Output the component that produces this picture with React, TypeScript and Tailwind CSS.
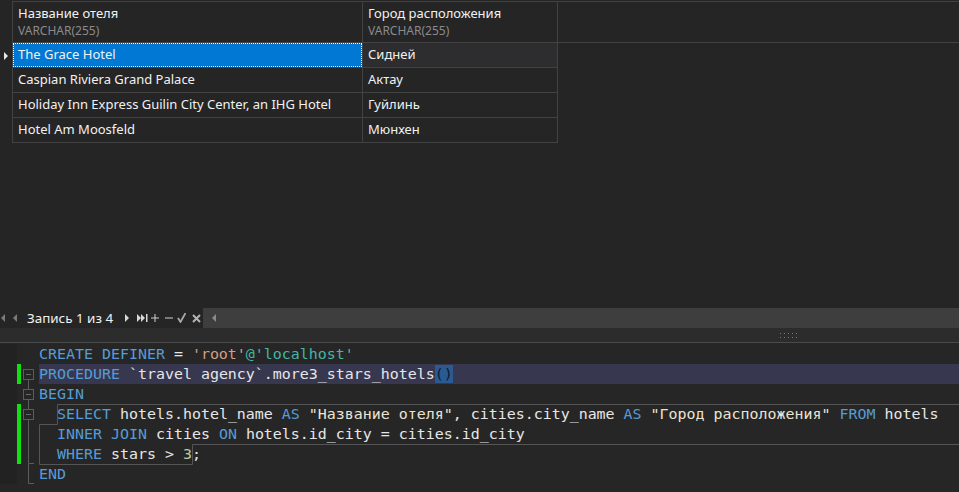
import React from 'react';

const rows = [
  { name: 'The Grace Hotel', city: 'Сидней' },
  { name: 'Caspian Riviera Grand Palace', city: 'Актау' },
  { name: 'Holiday Inn Express Guilin City Center, an IHG Hotel', city: 'Гуйлинь' },
  { name: 'Hotel Am Moosfeld', city: 'Мюнхен' },
];

const K = ({ children }: { children: React.ReactNode }) => <span className="text-[#569cd6]">{children}</span>;
const S = ({ children }: { children: React.ReactNode }) => <span className="text-[#ebe3d3]">{children}</span>;

type Fold = 'none' | 'start' | 'box' | 'line' | 'end';

const FoldMark = ({ kind }: { kind: Fold }) => (
  <svg width="18" height="20" className="block">
    {kind === 'start' && (
      <>
        <rect x="2.5" y="5.5" width="10" height="10" fill="none" stroke="#5c5c5c" />
        <line x1="5" y1="10.5" x2="10" y2="10.5" stroke="#6a6a6a" />
        <line x1="7.5" y1="15.5" x2="7.5" y2="20" stroke="#5c5c5c" />
      </>
    )}
    {kind === 'box' && (
      <>
        <line x1="7.5" y1="0" x2="7.5" y2="5.5" stroke="#5c5c5c" />
        <rect x="2.5" y="5.5" width="10" height="10" fill="none" stroke="#5c5c5c" />
        <line x1="5" y1="10.5" x2="10" y2="10.5" stroke="#6a6a6a" />
        <line x1="7.5" y1="15.5" x2="7.5" y2="20" stroke="#5c5c5c" />
      </>
    )}
    {kind === 'line' && <line x1="7.5" y1="0" x2="7.5" y2="20" stroke="#5c5c5c" />}
    {kind === 'end' && (
      <>
        <line x1="7.5" y1="0" x2="7.5" y2="19.5" stroke="#5c5c5c" />
        <line x1="7.5" y1="19.5" x2="13" y2="19.5" stroke="#5c5c5c" />
      </>
    )}
  </svg>
);

const codeLines: { fold: Fold; changed: boolean; current?: boolean; content: React.ReactNode }[] = [
  {
    fold: 'none',
    changed: false,
    content: (
      <>
        <K>CREATE DEFINER</K> = <span className="text-[#d69d85]">'root'</span>
        <span className="text-[#45b5a5]">@'localhost'</span>
      </>
    ),
  },
  {
    fold: 'start',
    changed: true,
    current: true,
    content: (
      <>
        <K>PROCEDURE</K> `travel agency`.more3_stars_hotels
        <span className="bg-[#2b5a93] text-[#0c1a2c]">()</span>
      </>
    ),
  },
  { fold: 'box', changed: false, content: <K>BEGIN</K> },
  {
    fold: 'box',
    changed: true,
    content: (
      <>
        {'  '}
        <K>SELECT</K> hotels.hotel_name <K>AS</K> <S>"Название отеля"</S>, cities.city_name <K>AS</K>{' '}
        <S>"Город расположения"</S> <K>FROM</K> hotels
      </>
    ),
  },
  {
    fold: 'line',
    changed: true,
    content: (
      <>
        {'  '}
        <K>INNER JOIN</K> cities <K>ON</K> hotels.id_city = cities.id_city
      </>
    ),
  },
  {
    fold: 'end',
    changed: true,
    content: (
      <>
        {'  '}
        <K>WHERE</K> stars &gt; <span className="text-[#b5cea8]">3</span>;
      </>
    ),
  },
  { fold: 'end', changed: false, content: <K>END</K> },
];

const Tri = ({ dir, color }: { dir: 'l' | 'r'; color: string }) => (
  <svg width="4" height="8" className="block">
    {dir === 'l' ? <polygon points="4,0 4,8 0,4" fill={color} /> : <polygon points="0,0 0,8 4,4" fill={color} />}
  </svg>
);

export default function App() {
  return (
    <div className="w-[959px] h-[492px] bg-[#252526] flex flex-col overflow-hidden text-[#f1f1f1] font-['Noto_Sans',sans-serif]">
      {/* result grid */}
      <div className="h-[308px] pt-px">
        <div className="flex h-[42px]">
          <div className="w-[12px]" />
          <div className="w-[351px] border border-[#424242] pl-[5px] pt-[3px] flex flex-col">
            <div className="text-[13px] leading-[17px]">Название отеля</div>
            <div className="text-[12px] leading-[17px] text-[#8b8b8b]">VARCHAR(255)</div>
          </div>
          <div className="w-[195px] border-y border-r border-[#424242] pl-[5px] pt-[3px] flex flex-col">
            <div className="text-[13px] leading-[17px]">Город расположения</div>
            <div className="text-[12px] leading-[17px] text-[#8b8b8b]">VARCHAR(255)</div>
          </div>
          <div className="flex-1 border-y border-[#424242]" />
        </div>
        {rows.map((r, i) => (
          <div key={r.name} className="flex h-[25px]">
            <div className="w-[12px] flex items-center pl-[4px]">
              {i === 0 && <Tri dir="r" color="#e8e8e8" />}
            </div>
            <div
              className={
                'w-[351px] border-l border-r border-b border-[#424242] flex items-center text-[13px] ' +
                (i === 0 ? 'bg-[#0078d4]' : '')
              }
            >
              <div
                className={
                  'w-full h-full flex items-center pl-[4px] ' +
                  (i === 0 ? 'border border-dotted border-white' : 'border border-transparent')
                }
              >
                {r.name}
              </div>
            </div>
            <div
              className={
                'w-[195px] border-r border-b border-[#424242] flex items-center pl-[5px] text-[13px] ' +
                (i === 0 ? 'bg-[#2d2d30]' : '')
              }
            >
              {r.city}
            </div>
          </div>
        ))}
      </div>

      {/* record navigator */}
      <div className="h-[20px] flex items-center">
        <div className="w-[203px] flex items-center h-full pl-[1px]">
          <Tri dir="l" color="#7a7a7a" />
          <div className="ml-[8px]">
            <Tri dir="l" color="#7a7a7a" />
          </div>
          <span className="text-[13.4px] ml-[10px] w-[98px] whitespace-nowrap">Запись 1 из 4</span>
          <Tri dir="r" color="#d8d8d8" />
          <svg width="11" height="8" className="block ml-[8px]">
            <polygon points="0,0 0,8 4,4" fill="#d8d8d8" />
            <polygon points="4,0 4,8 8,4" fill="#d8d8d8" />
            <rect x="9" y="0" width="1.5" height="8" fill="#d8d8d8" />
          </svg>
          <svg width="8" height="8" className="block ml-[3px]">
            <rect x="0" y="3.5" width="8" height="1" fill="#d0d0d0" />
            <rect x="3.5" y="0" width="1" height="8" fill="#d0d0d0" />
          </svg>
          <svg width="8" height="8" className="block ml-[6px]">
            <rect x="0" y="3.5" width="8" height="1" fill="#d0d0d0" />
          </svg>
          <svg width="9" height="10" className="block ml-[4px]">
            <polyline points="1,5 3.5,9 8.5,0" fill="none" stroke="#a8a8a8" strokeWidth="1.8" />
          </svg>
          <svg width="9" height="9" className="block ml-[6px]">
            <path d="M1 1 L8 8 M8 1 L1 8" stroke="#b4b4b4" strokeWidth="2" />
          </svg>
        </div>
        <div className="flex-1 h-full bg-[#3e3e3e] flex items-center pl-[9px]">
          <Tri dir="l" color="#8a8a8a" />
        </div>
      </div>

      {/* splitter */}
      <div className="h-[15px] bg-[#2c2c2c] border-b border-[#4a4a4a] flex justify-end pr-[161px] pt-[5px]">
        <svg width="18" height="6" className="block">
          {[0, 4, 8, 12, 16].map((x) => (
            <React.Fragment key={x}>
              <rect x={x} y="0" width="1" height="1" fill="#7a7a7a" />
              <rect x={x} y="4" width="1" height="1" fill="#7a7a7a" />
            </React.Fragment>
          ))}
        </svg>
      </div>

      {/* editor */}
      <div className="flex-1 relative bg-[#262626] pt-[1px] font-['DejaVu_Sans_Mono',monospace] text-[14.95px] text-[#e6e6e6]">
        {codeLines.map((l, i) => (
          <div key={i} className="flex h-[20px]">
            <div className="w-[17px] bg-[#222222]" />
            <div className={'w-[4px] ' + (l.changed ? 'bg-[#10e010]' : '')} />
            <div className="w-[18px]">
              <FoldMark kind={l.fold} />
            </div>
            <div className={'flex-1 whitespace-pre leading-[20px] ' + (l.current ? 'bg-[#373750]' : '')}>{l.content}</div>
          </div>
        ))}
        <svg className="absolute left-0 top-[1px] pointer-events-none" width="959" height="147">
          <path
            d="M57.5 60.5 H959 M57.5 60.5 V80.5 H39.5 V120.5 H192.5 V100.5 H959"
            fill="none"
            stroke="#555555"
          />
        </svg>
      </div>
    </div>
  );
}
